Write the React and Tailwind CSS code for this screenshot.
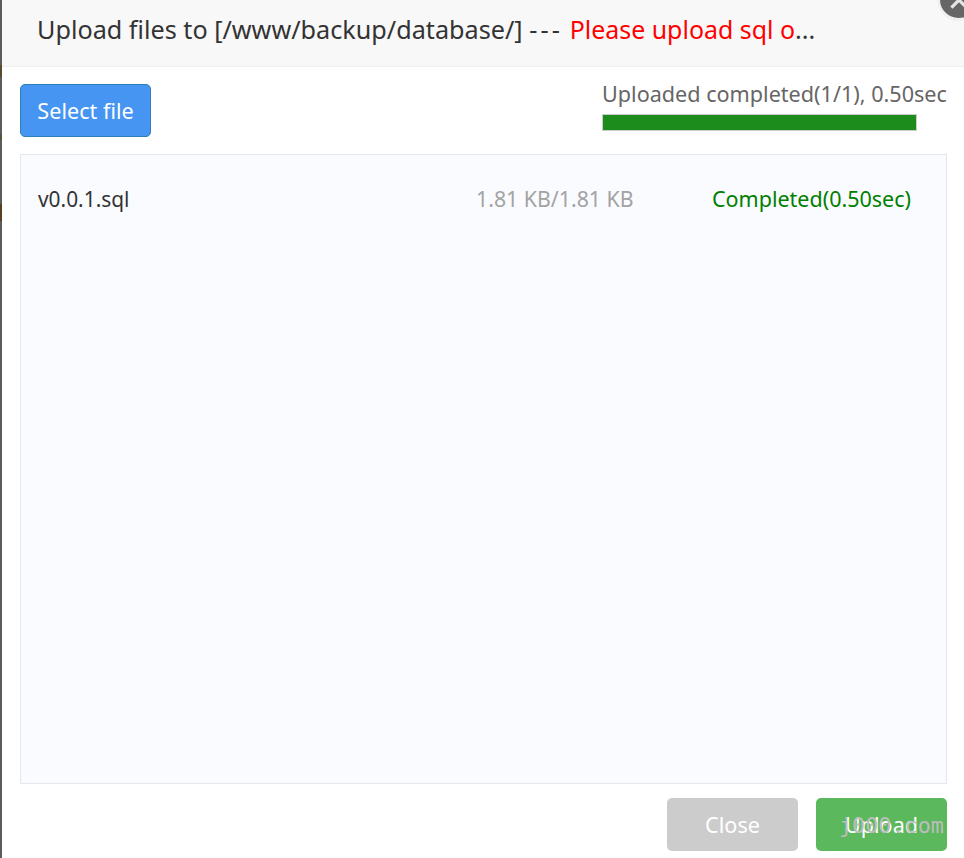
export default function App() {
  return (
    <div className="relative h-[858px] w-[964px] overflow-hidden bg-white font-['Noto_Sans',sans-serif]">
      <div className="flex h-[858px] border-l-2 border-[#5c5c5c]">
        <div className="flex min-w-0 flex-1 flex-col">
          <header className="flex h-[67px] items-center border-b border-[#eeeeee] bg-[#f8f8f8] pb-[6px] pl-[35px] text-[25.2px] text-[#333333]">
            <span className="whitespace-pre">Upload files to [/www/backup/database/] <span className="tracking-[3.2px]">---</span> <span className="text-[24.95px] text-[#ff0000]">Please upload sql o</span>...</span>
          </header>
          <div className="flex flex-1 flex-col pl-[18px] pr-[17px]">
            <div className="flex h-[87px] items-start justify-between">
              <button className="mt-[17px] h-[53px] w-[131px] rounded-[5px] border border-[#2e7fb8] bg-[#4695f2] pt-[2px] text-[21.6px] text-white">Select file</button>
              <div className="mt-[13px] w-[345px]">
                <div className="whitespace-nowrap text-[21.6px] leading-[28px] text-[#666666]">Uploaded completed(1/1), 0.50sec</div>
                <div className="mt-[6px] h-[17px] w-[315px] border border-[#cccccc] bg-[#1c8c1c]" />
              </div>
            </div>
            <div className="flex h-[630px] items-start border border-[#e4e7ee] bg-[#fafbff] pl-[17px] pt-[28px] leading-[32px]">
              <span className="w-[438px] text-[20.9px] text-[#333333]">v0.0.1.sql</span>
              <span className="w-[236px] text-[21.3px] text-[#a3a3a3]">1.81 KB/1.81 KB</span>
              <span className="text-[21.5px] text-[#008000]">Completed(0.50sec)</span>
            </div>
            <div className="flex flex-1 items-start justify-end gap-[18px] pt-[14px]">
              <button className="h-[53px] w-[131px] rounded-[5px] bg-[#cccccc] pt-[2px] text-[21.6px] text-white">Close</button>
              <button className="relative h-[53px] w-[131px] rounded-[5px] bg-[#5cb85c] pt-[2px] text-[21.6px] text-white">
                Upload
                <span className="absolute left-[23px] top-[14px] font-['DejaVu_Sans_Mono',monospace] text-[21.8px] leading-[28px] text-[#bdbdbd]">j000.com</span>
              </button>
            </div>
          </div>
        </div>
      </div>
      <div className="absolute left-0 top-[65px] h-[12px] w-[2px] bg-[#5a4a30]" />
      <div className="absolute left-0 top-[134px] h-[6px] w-[2px] bg-[#5a5240]" />
      <div className="absolute left-0 top-[204px] h-[17px] w-[2px] bg-[#5a4020]" />
      <div className="absolute right-[-16px] top-[-22px] flex h-[43px] w-[43px] items-center justify-center rounded-full border-[3px] border-[#f0f0f0] bg-[#666666]">
        <svg viewBox="0 0 24 24" className="h-[26px] w-[26px]" fill="none" stroke="#e5e5e5" strokeWidth="3"><path d="M5 5 L19 19 M19 5 L5 19" /></svg>
      </div>
    </div>
  );
}
